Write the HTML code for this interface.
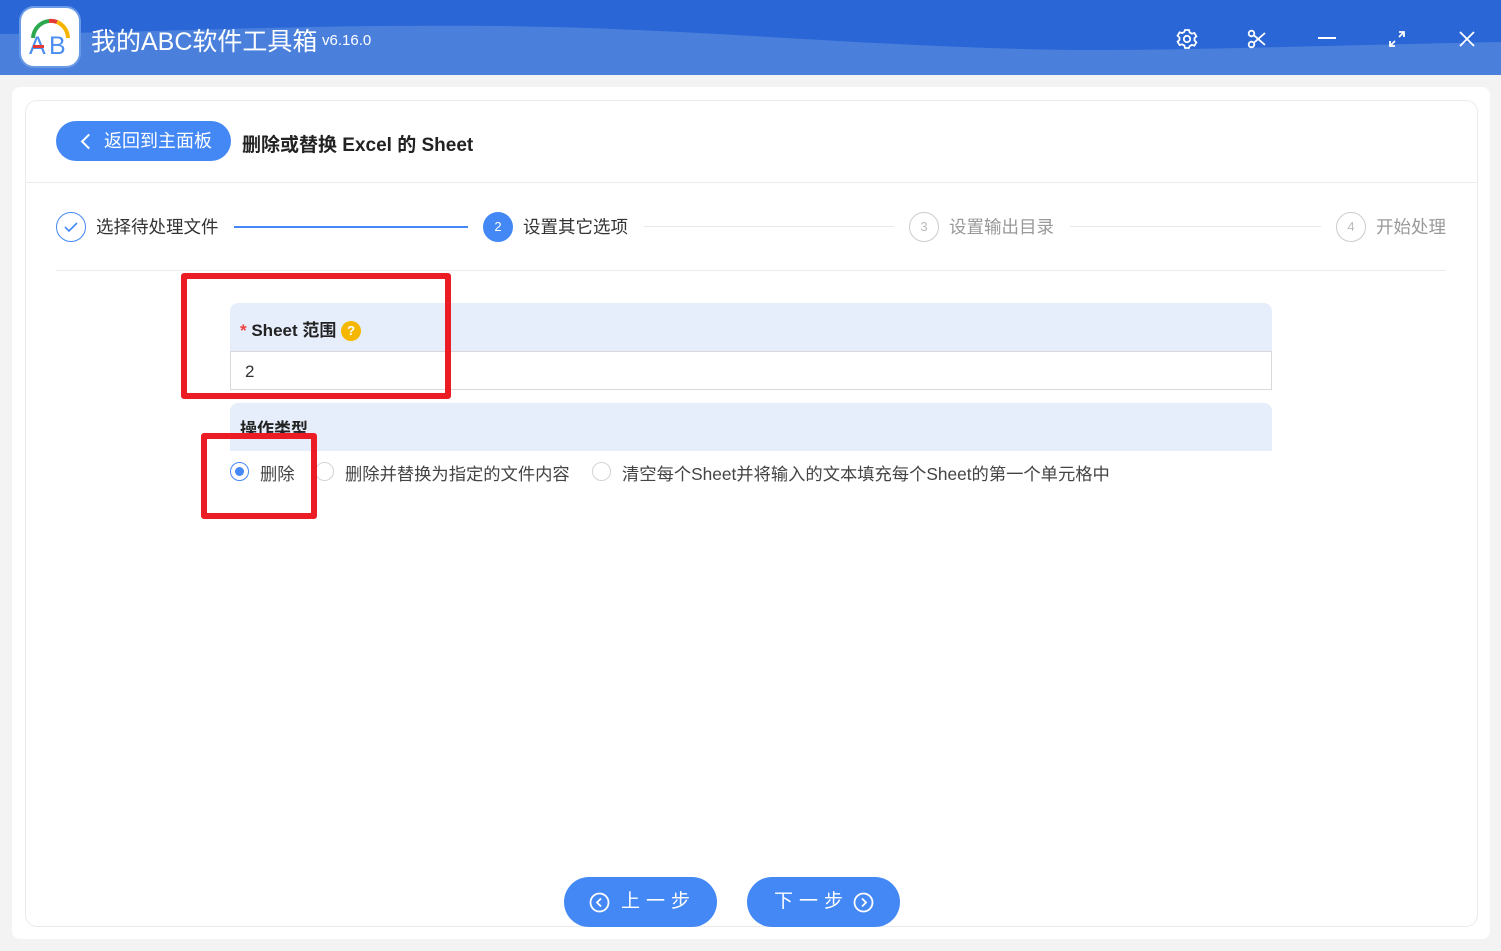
<!DOCTYPE html>
<html><head><meta charset="utf-8"><style>
*{margin:0;padding:0;box-sizing:border-box}
body{width:1501px;height:951px;background:#f3f3f3;font-family:"Liberation Sans","Noto Sans CJK SC",sans-serif;position:relative;overflow:hidden;color:#333}
.hdr{position:absolute;left:0;top:0;width:1501px;height:75px;background:#4a80dc;overflow:hidden}
.logo{position:absolute;left:21px;top:8px;width:58px;height:58px;border-radius:13px;background:#fff;box-shadow:0 0 0 2px #6a9ae6}
.title{position:absolute;left:91px;top:22px;color:#fff;font-size:25px}
.ver{position:absolute;left:322px;top:32px;color:#fff;font-size:15px}
.card{position:absolute;left:12px;top:87px;width:1478px;height:852px;background:#fff;border-radius:8px}
.inner{position:absolute;left:25px;top:100px;width:1453px;height:827px;border:1px solid #ebebeb;border-radius:12px}
.back{position:absolute;left:56px;top:121px;width:175px;height:40px;border-radius:20px;background:#4388f5;color:#fff;font-size:18px;line-height:40px;padding-left:48px}
.back:before{content:"";position:absolute;left:27px;top:15px;width:9px;height:9px;border-left:2px solid #fff;border-bottom:2px solid #fff;transform:rotate(45deg)}
.ptitle{position:absolute;left:242px;top:130px;font-size:19px;font-weight:bold;color:#222}
.hl{position:absolute;height:1px;background:#ececec}
.step{position:absolute;top:214px;font-size:17.5px;line-height:26px;color:#333}
.circ{position:absolute;top:212px;width:30px;height:30px;border-radius:50%;border:1px solid #ccc;color:#bbb;font-size:13px;text-align:center;line-height:28px}
.sl{position:absolute;top:226px;height:1px;background:#e8e8e8}
.fh{position:absolute;left:230px;width:1042px;height:48px;background:#e6eefb;border-radius:8px 8px 0 0}
.inp{position:absolute;left:230px;top:351px;width:1042px;height:39px;border:1px solid #d9d9d9;background:#fff;font-size:17px;padding:10px 14px}
.lab{position:absolute;font-size:17px;font-weight:bold;color:#222}
.rad{position:absolute;top:462px;width:19px;height:19px;border-radius:50%;border:1px solid #d3d3d3;background:#fff}
.rt{position:absolute;top:460px;font-size:17.3px;color:#444;white-space:nowrap}
.red{position:absolute;border:6px solid #ec1c24;border-radius:3px}
.btn{position:absolute;top:877px;width:153px;height:50px;border-radius:25px;background:#4388f5;color:#fff;font-size:19px;line-height:50px;letter-spacing:6px}
.btn svg{position:absolute;top:15px}
</style></head><body>
<div class="hdr"><svg width="1501" height="75" style="position:absolute;left:0;top:0"><path d="M0 0H1501V42C1300 46 1200 50 1100 50 C900 50 700 28 500 26 C300 24 150 33 0 34Z" fill="#2a66d6"/></svg></div>
<div class="logo"><svg width="58" height="58" viewBox="0 0 58 58">
<path d="M12 30 A18 18 0 0 1 28 13" stroke="#2ea84e" stroke-width="4" fill="none"/>
<path d="M28 13 A18 18 0 0 1 36 14" stroke="#e53935" stroke-width="4" fill="none"/>
<path d="M36 14 A18 18 0 0 1 47 30" stroke="#f4b400" stroke-width="4" fill="none"/>
<text x="8" y="46" font-family="Liberation Sans" font-size="25" fill="#4a8ef0">A</text>
<rect x="12" y="37" width="11" height="3" fill="#e53935"/>
<text x="28" y="46" font-family="Liberation Sans" font-size="25" fill="#4a8ef0">B</text></svg></div>
<div class="title">我的ABC软件工具箱</div><div class="ver">v6.16.0</div>
<svg style="position:absolute;left:1176px;top:28px" width="22" height="22" viewBox="0 0 22 22" fill="none" stroke="#fff" stroke-width="1.8"><path d="M9 2h4l.7 2.5 2.2 1.2 2.5-.8 2 3.4-1.9 1.8v2.4l1.9 1.8-2 3.4-2.5-.8-2.2 1.2L13 20H9l-.7-2.5-2.2-1.2-2.5.8-2-3.4 1.9-1.8V9.5L1.6 7.7l2-3.4 2.5.8 2.2-1.2z"/><circle cx="11" cy="11" r="3.2"/></svg>
<svg style="position:absolute;left:1247px;top:29px" width="20" height="20" viewBox="0 0 20 20" fill="none" stroke="#fff" stroke-width="1.8"><circle cx="4.5" cy="4.5" r="2.8"/><circle cx="4.5" cy="15.5" r="2.8"/><path d="M6.8 6.2 18 16M6.8 13.8 18 4"/></svg>
<div style="position:absolute;left:1318px;top:37px;width:18px;height:2px;background:#fff"></div>
<svg style="position:absolute;left:1388px;top:30px" width="18" height="18" viewBox="0 0 18 18" fill="none" stroke="#fff" stroke-width="1.8"><path d="M2 16 7 11M11 7l5-5M11 2h5v5M2 11v5h5"/></svg>
<svg style="position:absolute;left:1458px;top:30px" width="18" height="18" viewBox="0 0 18 18" stroke="#fff" stroke-width="1.8"><path d="M2 2l14 14M16 2 2 16"/></svg>
<div class="card"></div><div class="inner"></div>
<div class="back">返回到主面板</div>
<div class="ptitle">删除或替换 Excel 的 Sheet</div>
<div class="hl" style="left:26px;top:182px;width:1451px"></div>
<div class="circ" style="left:56px;border-color:#4388f5"><svg width="28" height="28" viewBox="0 0 28 28"><path d="M8 14l4 4 8-8" stroke="#4388f5" stroke-width="1.6" fill="none"/></svg></div>
<div class="step" style="left:96px">选择待处理文件</div>
<div class="sl" style="left:234px;width:234px;height:2px;background:#4388f5"></div>
<div class="circ" style="left:483px;background:#4388f5;border-color:#4388f5;color:#fff">2</div>
<div class="step" style="left:523px">设置其它选项</div>
<div class="sl" style="left:644px;width:250px"></div>
<div class="circ" style="left:909px">3</div>
<div class="step" style="left:949px;color:#999">设置输出目录</div>
<div class="sl" style="left:1070px;width:251px"></div>
<div class="circ" style="left:1336px">4</div>
<div class="step" style="left:1376px;color:#999">开始处理</div>
<div class="hl" style="left:56px;top:270px;width:1390px"></div>
<div class="fh" style="top:303px"></div>
<div class="lab" style="left:240px;top:316px"><span style="color:#f04040">*</span> Sheet 范围 <span style="display:inline-block;width:20px;height:20px;border-radius:50%;background:#f5b700;color:#fff;font-size:13px;text-align:center;line-height:20px;vertical-align:1px">?</span></div>
<div class="inp">2</div>
<div class="fh" style="top:403px"></div>
<div class="lab" style="left:240px;top:415px">操作类型</div>
<div class="rad" style="left:230px;border-color:#4388f5"><div style="position:absolute;left:4px;top:4px;width:9px;height:9px;border-radius:50%;background:#4388f5"></div></div>
<div class="rt" style="left:260px">删除</div>
<div class="rad" style="left:315px"></div>
<div class="rt" style="left:345px">删除并替换为指定的文件内容</div>
<div class="rad" style="left:592px"></div>
<div class="rt" style="left:622px">清空每个Sheet并将输入的文本填充每个Sheet的第一个单元格中</div>
<div class="red" style="left:181px;top:273px;width:270px;height:126px"></div>
<div class="red" style="left:201px;top:433px;width:116px;height:86px"></div>
<div class="btn" style="left:564px;padding-left:57px"><svg style="left:25px" width="21" height="21" viewBox="0 0 21 21" fill="none" stroke="#fff" stroke-width="1.8"><circle cx="10.5" cy="10.5" r="9"/><path d="M12 6.5 8 10.5l4 4"/></svg>上一步</div>
<div class="btn" style="left:747px;padding-left:27px">下一步<svg style="left:106px" width="21" height="21" viewBox="0 0 21 21" fill="none" stroke="#fff" stroke-width="1.8"><circle cx="10.5" cy="10.5" r="9"/><path d="M9 6.5l4 4-4 4"/></svg></div>
</body></html>
